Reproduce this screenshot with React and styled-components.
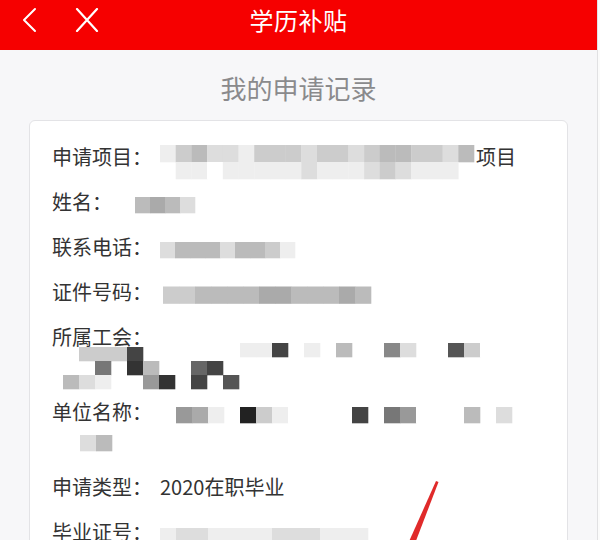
import React from 'react';
import styled, { createGlobalStyle } from 'styled-components';

const GlobalStyle = createGlobalStyle`
  html, body {
    margin: 0;
    padding: 0;
    background: #fbfbfb;
  }
  body {
    font-family: "Noto Sans CJK SC", "Noto Sans", sans-serif;
  }
`;

const Screen = styled.div`
  position: relative;
  width: 597px;
  height: 540px;
  overflow: hidden;
  background: #f7f7f9;
  border-right: 1px solid #e1e1e3;
`;

const Header = styled.header`
  display: grid;
  grid-template-columns: 1fr auto 1fr;
  align-items: center;
  height: 50px;
  padding-bottom: 10px;
  box-sizing: border-box;
  background: #f60000;
  color: #fff;
`;

const NavIcons = styled.div`
  display: flex;
  align-items: center;
  gap: 38px;
  padding-left: 21px;
`;

const Title = styled.h1`
  margin: 0;
  font-size: 24px;
  font-weight: 400;
  line-height: 30px;
  letter-spacing: 0.5px;
`;

const SubTitle = styled.h2`
  margin: 20px 0 14px;
  text-align: center;
  font-size: 26px;
  font-weight: 400;
  line-height: 36px;
  color: #8a8a8c;
`;

const Card = styled.section`
  margin: 0 29px;
  padding: 19px 22px 0;
  min-height: 500px;
  background: #fff;
  border: 1px solid #e3e3e6;
  border-radius: 6px;
`;

const Row = styled.p`
  margin: 0 0 12px;
  font-size: 20px;
  line-height: 33px;
  color: #333;
`;

const Label = styled.span`
  margin-right: 8px;
`;

/* the pixelated (blurred out) values are drawn as a picture; the box keeps a small
   height so the squares never stretch the line, and they spill over evenly */
const MosaicSvg = styled.svg`
  display: ${(p) => (p.$block ? 'block' : 'inline-block')};
  vertical-align: middle;
  overflow: visible;
  margin-left: ${(p) => p.$indent || 0}px;
  margin-right: ${(p) => p.$gap || 0}px;
`;

// each character is one square: a hex digit gives the grey level, a space is empty
const Blur = ({ rows, w = 16, h = 16, block, indent, gap, drop = 0 }) => {
  const width = Math.max(...rows.map((r) => r.length)) * w;
  const box = block ? 30 : 16;
  const top = (box - rows.length * h) / 2 + drop;
  return (
    <MosaicSvg
      $block={block}
      $indent={indent}
      $gap={gap}
      width={width}
      height={box}
      viewBox={`0 0 ${width} ${box}`}
    >
      {rows.map((r, i) =>
        r.split('').map((ch, j) =>
          ch === ' ' ? null : (
            <rect
              key={`${i}-${j}`}
              x={j * w}
              y={top + i * h}
              width={w + 0.3}
              height={h + 0.3}
              fill={`#${ch}${ch}${ch}`}
            />
          )
        )
      )}
    </MosaicSvg>
  );
};

const Value = styled.span`
  color: #333;
`;

const Annotation = styled.svg`
  position: absolute;
  left: 400px;
  top: 476px;
`;

const ChevronLeft = () => (
  <svg width="16" height="26" viewBox="0 0 16 26">
    <polyline points="14,2 3,13 14,24" fill="none" stroke="#fff" strokeWidth="2" strokeLinecap="round" strokeLinejoin="round" />
  </svg>
);

const CloseIcon = () => (
  <svg width="24" height="24" viewBox="0 0 24 24">
    <path d="M2 1 L22 23 M22 1 L2 23" fill="none" stroke="#fff" strokeWidth="2.2" strokeLinecap="round" />
  </svg>
);

const App = () => {
  return (
    <>
      <GlobalStyle />
      <Screen>
        <Header>
          <NavIcons>
            <ChevronLeft />
            <CloseIcon />
          </NavIcons>
          <Title>学历补贴</Title>
          <div />
        </Header>
        <SubTitle>我的申请记录</SubTitle>
        <Card>
          <Row>
            <Label>申请项目：</Label>
            <Blur
              w={15.7}
              h={17}
              gap={2}
              drop={2}
              rows={['ecbddecccdccdcbbccdb', ' eefeeeeedeeedcdeee ']}
            />
            项目
          </Row>
          <Row>
            <Label>姓名：</Label>
            <Blur w={15} rows={['fbabd']} />
          </Row>
          <Row>
            <Label>联系电话：</Label>
            <Blur w={15} rows={['dbbbdbbce']} />
          </Row>
          <Row>
            <Label>证件号码：</Label>
            <Blur w={16} h={17} indent={3} rows={['ccbbbbaabbbab']} />
          </Row>
          <Row>
            <Label>所属工会：</Label>
            <Blur w={16} h={14} drop={3} rows={['ff  f   f  f ff ff  fff', '     ee4 e b  8d  5cfff']} />
            <Blur
              block
              w={16}
              h={14}
              indent={11}
              rows={[' ccc4      ', '  7 3b  64 ', 'bde  93 4 5']}
            />
          </Row>
          <Row>
            <Label>单位名称：</Label>
            <Blur w={16} rows={[' 9ae 2ceff  4 79ff b d']} />
            <Blur block w={16} indent={28} rows={['db']} />
          </Row>
          <Row>
            <Label>申请类型：</Label>
            <Value>2020在职毕业</Value>
          </Row>
          <Row>
            <Label>毕业证号：</Label>
            <Blur w={16} h={18} drop={2} rows={['eddeeeedddeee']} />
          </Row>
        </Card>
        <Annotation width="50" height="70" viewBox="0 0 50 70">
          <polygon points="36,5 38.5,6 14,70 7,70" fill="#e02a2a" />
        </Annotation>
      </Screen>
    </>
  );
};

export default App;
